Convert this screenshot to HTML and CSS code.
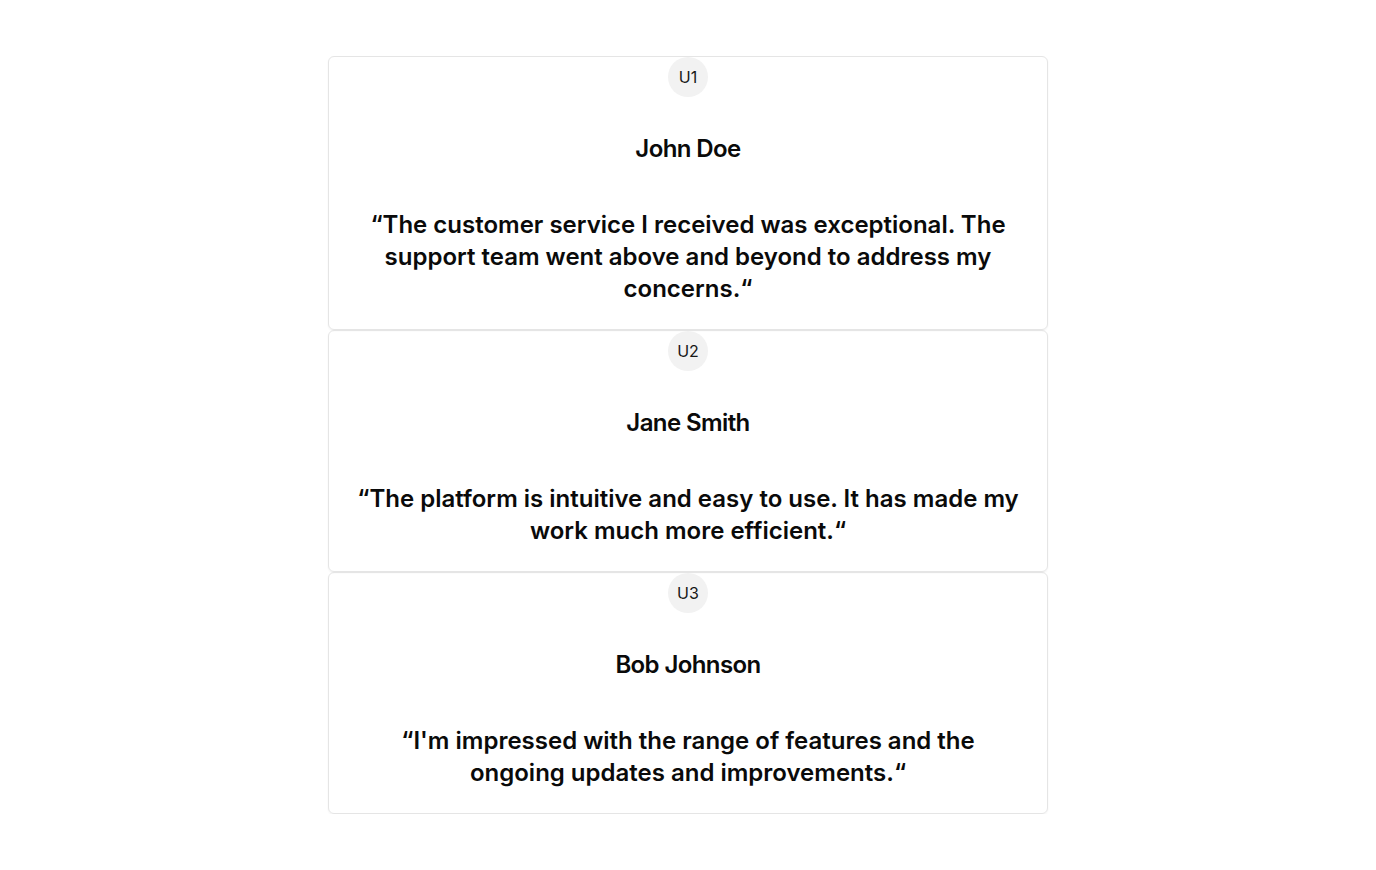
FILE: index.html
```html
<!DOCTYPE html>
<html lang="en">
<head>
<meta charset="utf-8">
<link rel="stylesheet" href="styles.css">
</head>
<body>
<main class="list">
  <article class="card">
    <div class="avatar">U1</div>
    <h3 class="name">John Doe</h3>
    <p class="quote">“The customer service I received was exceptional. The support team went above and beyond to address my concerns.“</p>
  </article>
  <article class="card">
    <div class="avatar">U2</div>
    <h3 class="name">Jane Smith</h3>
    <p class="quote">“The platform is intuitive and easy to use. It has made my work much more efficient.“</p>
  </article>
  <article class="card">
    <div class="avatar">U3</div>
    <h3 class="name">Bob Johnson</h3>
    <p class="quote">“I'm impressed with the range of features and the ongoing updates and improvements.“</p>
  </article>
</main>
</body>
</html>
```
FILE: styles.css
```css
* { box-sizing: border-box; }
html, body { margin: 0; padding: 0; background: #fff; }
body {
  font-family: Inter, "Noto Sans", sans-serif;
  color: #0a0a0a;
}
.list {
  width: 720px;
  margin: 56px auto 0;
  display: flex;
  flex-direction: column;
}
.card {
  border: 1px solid #e5e5e5;
  border-radius: 6px;
  box-shadow: 0 1px 2px rgba(0,0,0,0.05);
  display: flex;
  flex-direction: column;
  align-items: center;
  padding: 0 24px 24px;
}
.avatar {
  width: 40px;
  height: 40px;
  border-radius: 50%;
  background: #f2f2f2;
  display: flex;
  align-items: center;
  justify-content: center;
  font-size: 16px;
  color: #171717;
}
.name {
  margin: 36px 0 0;
  font-size: 24px;
  line-height: 32px;
  font-weight: 600;
  letter-spacing: -0.025em;
  text-align: center;
}
.quote {
  margin: 44px 0 0;
  font-size: 24px;
  line-height: 32px;
  font-weight: 600;
  text-align: center;
}
```
